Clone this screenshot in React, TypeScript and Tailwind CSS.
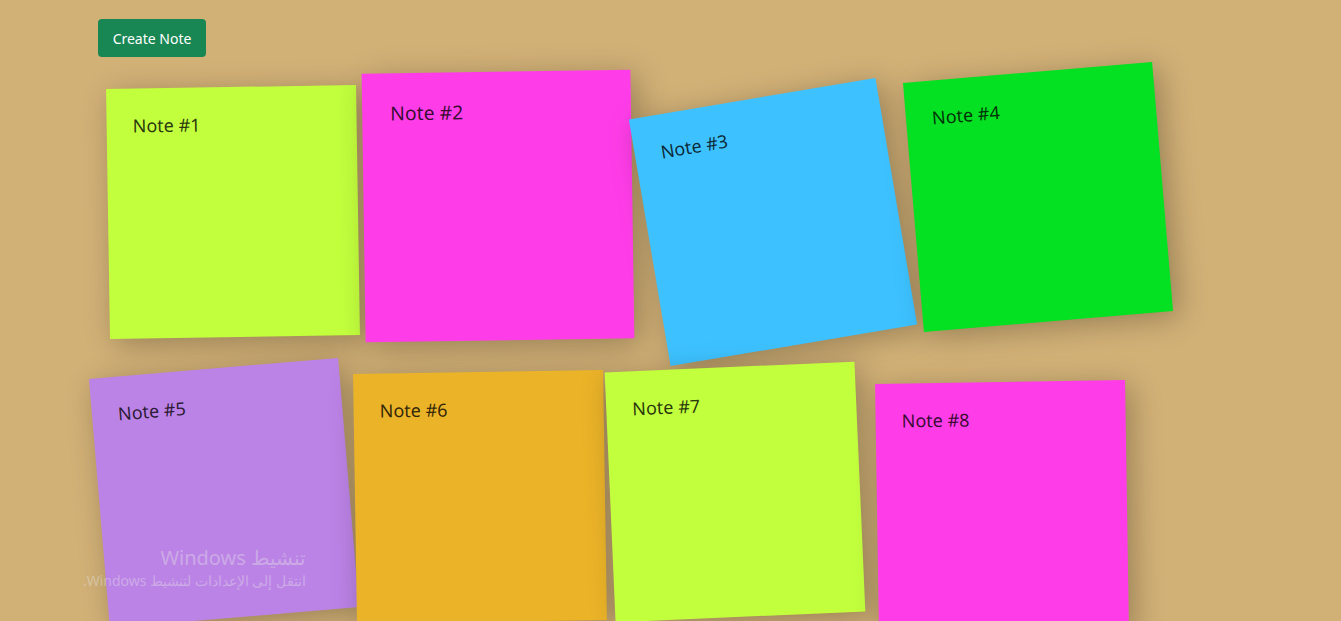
import React from 'react';

const NOTES = [
    { id: 1, cls: 'bg-[#c2ff3d] translate-y-[2px] rotate-[-0.9deg]' },
    { id: 2, cls: 'bg-[#ff3de8] -translate-y-[4px] rotate-[-0.85deg] scale-[1.075]' },
    { id: 3, cls: 'bg-[#3dc2ff] translate-x-[10px] translate-y-[12px] rotate-[-9.6deg]' },
    { id: 4, cls: 'bg-[#04e022] translate-x-[10px] -translate-y-[13px] rotate-[-4.8deg]' },
    { id: 5, cls: 'bg-[#bc83e6] -translate-x-[9px] -translate-y-[2px] rotate-[-4.8deg]' },
    { id: 6, cls: 'bg-[#ebb328] -translate-x-[18px] translate-y-[2px] rotate-[-0.9deg]' },
    { id: 7, cls: 'bg-[#c2ff3d] -translate-x-[28px] -translate-y-[3px] rotate-[-2.5deg]' },
    { id: 8, cls: 'bg-[#ff3de8] -translate-x-[26px] translate-y-[12px] rotate-[-0.9deg]' },
];

function Note({ id, cls }) {
    return (
        <div
            className={`w-[250px] h-[250px] px-[26px] pt-[24px] shadow-[6px_6px_30px_rgba(0,0,0,0.28)] ${cls}`}
        >
            <span className="text-[18px] text-black/80">Note #{id}</span>
        </div>
    );
}

export default function App() {
    return (
        <div className="relative w-[1341px] h-[621px] overflow-hidden bg-[#d2b177] font-['Noto_Sans',sans-serif]">
            <div className="pl-[98px] pt-[19px]">
                <button className="h-[38px] w-[108px] rounded-[4px] bg-[#198754] text-white text-[14px]">
                    Create Note
                </button>
                <div className="mt-[28px] ml-[10px] grid grid-cols-[repeat(4,250px)] gap-x-[15px] gap-y-[35px]">
                    {NOTES.map(n => (
                        <Note key={n.id} id={n.id} cls={n.cls} />
                    ))}
                </div>
            </div>
            {/* windows activation watermark */}
            <div
                dir="rtl"
                className="absolute left-[60px] top-[544px] w-[246px] text-right text-[#e6e6e6]/40"
            >
                <div className="text-[20px] leading-[28px]">تنشيط Windows</div>
                <div className="text-[14px] leading-[18px]">انتقل إلى الإعدادات لتنشيط Windows.</div>
            </div>
        </div>
    );
}
